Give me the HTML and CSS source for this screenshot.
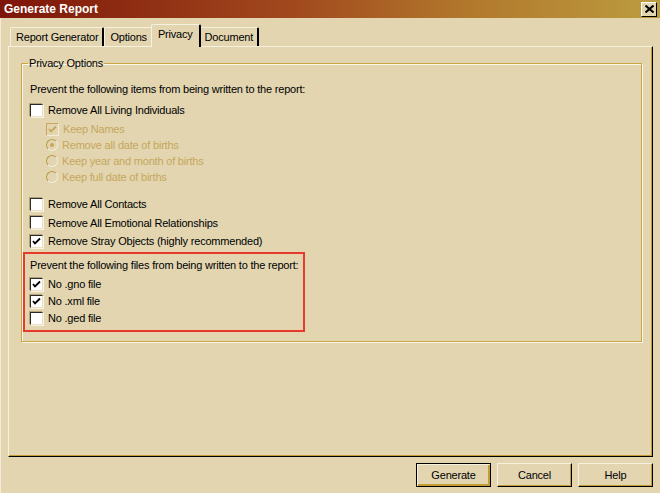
FILE: index.html
```html
<!DOCTYPE html>
<html lang="en">
<head>
    <meta charset="UTF-8">
    <title>Generate Report</title>
    <link rel="stylesheet" href="styles.css">
</head>
<body>

<div class="window">
    <div class="titlebar">
        <span class="title">Generate Report</span>
        <button class="close">
            <svg width="9" height="8" viewBox="0 0 9 8"><path d="M0.5 0.5 L8.5 7.5 M8.5 0.5 L0.5 7.5" stroke="#000" stroke-width="2"/></svg>
        </button>
    </div>

    <div class="tabs">
        <div class="tab">Report Generator</div>
        <div class="tab">Options</div>
        <div class="tab active">Privacy</div>
        <div class="tab">Document</div>
    </div>

    <div class="panel">
        <fieldset class="group">
            <legend>Privacy Options</legend>

            <div class="note">Prevent the following items from being written to the report:</div>

            <label class="row first"><span class="box"></span>Remove All Living Individuals</label>

            <div class="sub">
                <label class="row off"><span class="box checked"><svg width="9" height="9" viewBox="0 0 9 9"><path d="M1 4 L3 6.5 L8 1.5" fill="none" stroke="#c6a75c" stroke-width="1.8"/></svg></span>Keep Names</label>
                <label class="row off"><span class="radio on"></span>Remove all date of births</label>
                <label class="row off"><span class="radio"></span>Keep year and month of births</label>
                <label class="row off"><span class="radio"></span>Keep full date of births</label>
            </div>

            <div class="list">
                <label class="row"><span class="box"></span>Remove All Contacts</label>
                <label class="row"><span class="box"></span>Remove All Emotional Relationships</label>
                <label class="row"><span class="box checked"><svg width="9" height="9" viewBox="0 0 9 9"><path d="M1 4 L3 6.5 L8 1.5" fill="none" stroke="#000" stroke-width="1.8"/></svg></span>Remove Stray Objects (highly recommended)</label>
            </div>

            <div class="files">
                <div class="note">Prevent the following files from being written to the report:</div>
                <label class="row"><span class="box checked"><svg width="9" height="9" viewBox="0 0 9 9"><path d="M1 4 L3 6.5 L8 1.5" fill="none" stroke="#000" stroke-width="1.8"/></svg></span>No .gno file</label>
                <label class="row"><span class="box checked"><svg width="9" height="9" viewBox="0 0 9 9"><path d="M1 4 L3 6.5 L8 1.5" fill="none" stroke="#000" stroke-width="1.8"/></svg></span>No .xml file</label>
                <label class="row"><span class="box"></span>No .ged file</label>
            </div>
        </fieldset>
    </div>

    <div class="actions">
        <button class="button default">Generate</button>
        <button class="button">Cancel</button>
        <button class="button">Help</button>
    </div>
</div>

</body>
</html>
```

FILE: styles.css
```css
body {
    margin: 0;
    font-family: 'Liberation Sans', Arial, sans-serif;
    font-size: 11px;
    letter-spacing: -0.2px;
    color: #000;
    background: #e2d5b0;
}

.window {
    width: 660px;
    height: 493px;
    background: #e2d5b0;
    box-shadow: inset 1px 0 0 #f3ecd8;
}

.titlebar {
    height: 18px;
    display: flex;
    align-items: center;
    justify-content: space-between;
    padding: 0 3px 0 4px;
    box-sizing: border-box;
    background: linear-gradient(90deg, #7e1509, #a24a1e 45%, #b1772c 70%, #bc9c3f);
}

.title {
    color: #fff;
    font-weight: bold;
    font-size: 12px;
    letter-spacing: 0;
}

.close {
    width: 16px;
    height: 15px;
    padding: 0;
    display: flex;
    align-items: center;
    justify-content: center;
    background: #e2d5b0;
    border: 1px solid;
    border-color: #fff #000 #000 #fff;
}

/* tabs */
.tabs {
    display: flex;
    align-items: flex-end;
    height: 22px;
    margin-top: 6px;
    padding-left: 10px;
}

.tab {
    height: 19px;
    line-height: 18px;
    padding: 0 4px 0 5px;
    box-sizing: border-box;
    border-top: 1px solid #f6f0de;
    border-left: 1px solid #f6f0de;
    border-right: 2px solid #000;
    border-radius: 2px 2px 0 0;
    white-space: nowrap;
}

.tab.active {
    line-height: 19px;
    margin: 0 -2px -1px;
    padding: 0 6px;
    position: relative;
    z-index: 1;
    background: #e2d5b0;
    height: 23px;
}

/* main panel */
.panel {
    margin-left: 8px;
    width: 645px;
    height: 411px;
    box-sizing: border-box;
    border: 1px solid;
    border-color: #f6f0de #000 #000 #f6f0de;
    box-shadow: inset -1px -1px 0 #c39c35;
    padding: 10px 10px 0 12px;
}

.group {
    margin: 0;
    padding: 0 0 0 8px;
    height: 285px;
    box-sizing: border-box;
    border: 1px solid #c8a544;
    box-shadow: 1px 1px 0 #fbf6e6, inset 1px 1px 0 #fbf6e6;
}

.group legend {
    padding: 0 1px;
    margin-left: -2px;
}

.note {
    margin-top: 12px;
    height: 16px;
    line-height: 16px;
    white-space: nowrap;
}

.row {
    display: flex;
    align-items: center;
    gap: 5px;
    height: 18px;
    white-space: nowrap;
}

.row.first {
    margin-top: 4px;
}

.box {
    width: 13px;
    height: 13px;
    box-sizing: border-box;
    background: #fff;
    border: 1px solid;
    border-color: #2b2b2b #e9e0c4 #e9e0c4 #2b2b2b;
    box-shadow: -1px -1px 0 #b3a27a, 1px 1px 0 #f8f3e4;
    display: flex;
    align-items: center;
    justify-content: center;
    flex-shrink: 0;
}

.sub {
    padding-left: 16px;
    margin-top: 2px;
}

.row.off {
    color: #c6a75c;
    height: 16px;
    gap: 4px;
}

.row.off .box {
    background: #e2d5b0;
    border-color: #c6a75c #f3ecd7 #f3ecd7 #c6a75c;
    box-shadow: none;
}

.radio {
    width: 12px;
    height: 12px;
    box-sizing: border-box;
    border-radius: 50%;
    border: 1px solid;
    border-color: #b8984c #f3ecd7 #f3ecd7 #b8984c;
    display: flex;
    align-items: center;
    justify-content: center;
}

.radio.on::after {
    content: "";
    width: 4px;
    height: 4px;
    border-radius: 50%;
    background: #c6a75c;
}

.list {
    margin-top: 10px;
}

.list .row {
    height: 18.5px;
}

.files {
    margin: 1px 0 0 -7px;
    width: 282px;
    height: 80px;
    box-sizing: border-box;
    border: 2px solid #e83a2b;
    padding: 0 0 0 5px;
}

.files .note {
    margin: 3px 0 3px;
    height: 16px;
    line-height: 16px;
}

.files .row {
    height: 17px;
}

/* bottom buttons */
.actions {
    display: flex;
    justify-content: flex-end;
    gap: 6px;
    padding: 6px 7px 0 0;
}

.button {
    width: 75px;
    height: 24px;
    font-family: inherit;
    font-size: 11px;
    letter-spacing: -0.2px;
    background: #e2d5b0;
    border: 1px solid;
    border-color: #f6f0de #000 #000 #f6f0de;
    box-shadow: inset -1px -1px 0 #c39c35;
    padding: 0;
}

.button.default {
    border: 1px solid #000;
    box-shadow: inset 1px 1px 0 #f6f0de, inset -2px -2px 0 #c39c35;
}
```
